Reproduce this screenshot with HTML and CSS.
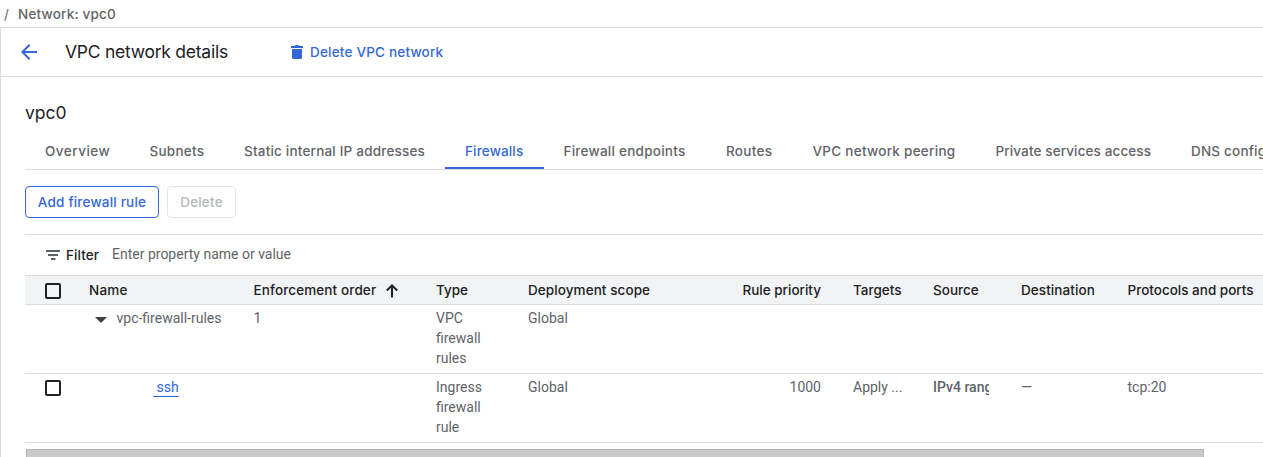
FILE: index.html
```html
<!DOCTYPE html>
<html lang="en">
<head>
<meta charset="utf-8">
<title>VPC network details</title>
<link rel="stylesheet" href="styles.css">
</head>
<body>
<nav class="crumbs"><span class="slash">/</span><span class="crumb">Network: vpc0</span></nav>
<main class="panel">
  <header class="header">
    <svg class="back" width="24" height="24" viewBox="0 0 24 24"><path d="M20 11H7.83l5.59-5.59L12 4l-8 8 8 8 1.41-1.41L7.83 13H20z"/></svg>
    <h1 class="title">VPC network details</h1>
    <button class="delete-network">
      <svg width="18" height="18" viewBox="0 0 18 18"><path d="M4 6h10v8.400a1.600 1.600 0 0 1-1.600 1.600H5.600A1.600 1.600 0 0 1 4 14.400zM3 3h3.500l1-1h3l1 1H15v2H3z"/></svg>
      <span class="delete-label">Delete VPC network</span>
    </button>
  </header>
  <section class="content">
    <h2 class="name">vpc0</h2>
    <div class="tabs">
      <div class="tab overview">Overview</div>
      <div class="tab subnets">Subnets</div>
      <div class="tab static">Static internal IP addresses</div>
      <div class="tab firewalls active">Firewalls</div>
      <div class="tab endpoints">Firewall endpoints</div>
      <div class="tab routes">Routes</div>
      <div class="tab peering">VPC network peering</div>
      <div class="tab private">Private services access</div>
      <div class="tab dns">DNS configuration</div>
    </div>
    <div class="actions">
      <button class="btn add">Add firewall rule</button>
      <button class="btn remove" disabled>Delete</button>
    </div>
    <div class="filter">
      <svg width="14" height="10" viewBox="0 0 14 10"><path d="M0 0h14v2H0zM2 4h10v2H2zM5 8h4.500v2H5z"/></svg>
      <span class="filter-label">Filter</span>
      <span class="filter-hint">Enter property name or value</span>
    </div>
    <div class="row head">
      <div class="check"><span class="box"></span></div>
      <div class="h-name">Name</div>
      <div class="sort"><span class="h-order">Enforcement order</span><svg width="12" height="14" viewBox="0 0 12 14"><path d="M6 13.500V1.500M.8 6.500 6 1.400l5.200 5.100" fill="none" stroke="#202124" stroke-width="2"/></svg></div>
      <div>Type</div>
      <div class="h-scope">Deployment scope</div>
      <div class="num">Rule priority</div>
      <div>Targets</div>
      <div>Source</div>
      <div class="h-dest">Destination</div>
      <div>Protocols and ports</div>
    </div>
    <div class="row">
      <div></div>
      <div class="group"><svg width="12" height="6" viewBox="0 0 12 6"><path d="M0 0h12L6 6z"/></svg>vpc-firewall-rules</div>
      <div>1</div>
      <div class="type">VPC firewall rules</div>
      <div>Global</div>
    </div>
    <div class="row">
      <div class="check"><span class="box"></span></div>
      <div><a class="link">ssh</a></div>
      <div></div>
      <div class="type">Ingress firewall rule</div>
      <div>Global</div>
      <div class="num">1000</div>
      <div>Apply ...</div>
      <div class="ranges">IPv4 ranges</div>
      <div>—</div>
      <div>tcp:20</div>
    </div>
    <div class="scroll"></div>
  </section>
</main>
</body>
</html>
```
FILE: styles.css
```css
* { box-sizing: border-box; }
body {
  margin: 0;
  height: 457px;
  overflow: hidden;
  background: #fff;
  color: #5f6368;
  font: 14px/20px Roboto, sans-serif;
}
h1, h2 { margin: 0; font-weight: 400; color: #202124; font-family: Inter, sans-serif; }
button { font: inherit; background: none; border: 0; padding: 0; }
.crumbs, .tab, .btn, .delete-network, .filter-label, .head {
  font-family: Inter, sans-serif;
  font-size: 13.5px;
  font-weight: 500;
}
.crumbs { height: 27px; padding: 4px 0 0 4px; display: flex; gap: 9px; }
.slash { font-weight: 400; width: 5px; }
.crumb { letter-spacing: 0.2px; }
.panel { height: 430px; border: solid #dadce0; border-width: 1px 0 0 1px; overflow: hidden; }
.header { height: 49px; border-bottom: 1px solid #dadce0; display: flex; align-items: center; padding-left: 16px; }
.back { fill: #3367d6; }
.title { width: 225px; margin-left: 24px; font-size: 17.5px; line-height: 24px; letter-spacing: -0.25px; white-space: nowrap; }
.delete-network { display: flex; align-items: center; gap: 4px; color: #3367d6; margin-left: -2px; letter-spacing: 0.2px; }
.delete-network svg { fill: #3367d6; }
.content { padding-left: 24px; }
.name { height: 56px; padding-top: 24px; font-size: 17.5px; line-height: 24px; }
.tabs { height: 37px; display: flex; border-bottom: 1px solid #dadce0; white-space: nowrap; overflow: hidden; }
.tab { flex: none; padding: 8px 0 0 20px; height: 36px; }
.active { color: #3367d6; border-bottom: 2px solid #3367d6; }
.overview { width: 104.5px; letter-spacing: 0.5px; }
.subnets { width: 94.5px; letter-spacing: 0.25px; }
.static { width: 221px; letter-spacing: 0.2px; }
.firewalls { width: 98.5px; letter-spacing: 0.15px; }
.endpoints { width: 162.5px; letter-spacing: 0.25px; }
.routes { width: 86.5px; letter-spacing: 0.3px; }
.peering { width: 183px; letter-spacing: 0.27px; }
.private { width: 195.5px; letter-spacing: 0.12px; }
.dns { letter-spacing: 0.2px; }
.actions { height: 64px; padding-top: 16px; display: flex; gap: 8px; }
.btn { height: 32px; border: 1px solid #3367d6; border-radius: 4px; color: #3367d6; white-space: nowrap; letter-spacing: 0.2px; }
.add { width: 134px; }
.remove { width: 69px; border-color: #e4e5e7; color: #b6b8ba; }
.filter { height: 41px; border-top: 1px solid #dadce0; padding: 0 0 2px 21px; display: flex; align-items: center; }
.filter svg { fill: #5f6368; margin-top: 2px; }
.filter-label { color: #202124; margin-left: 6px; width: 46px; margin-top: 1px; letter-spacing: 0.1px; }
.filter-hint { margin-top: -1px; }
.row {
  display: grid;
  grid-template-columns: 64px 164.5px 182.5px 92px 141px 184px 80px 88px 106.5px 200px;
  height: 69px;
  padding-top: 3px;
  border-bottom: 1px solid #dadce0;
}
.head { height: 30px; padding-top: 4px; border-top: 1px solid #dadce0; background: #f1f3f4; color: #202124; white-space: nowrap; }
.check { padding: 3px 0 0 20px; }
.box { display: block; width: 16px; height: 16px; border: 2px solid #202124; border-radius: 2px; }
.sort { display: flex; align-items: flex-start; }
.sort svg { margin-top: 4px; }
.h-name { letter-spacing: 0.2px; }
.h-order { width: 132.5px; letter-spacing: 0.12px; }
.h-scope, .h-dest { letter-spacing: 0.08px; }
.num { text-align: right; padding-right: 32px; }
.group { display: flex; padding-left: 6px; gap: 9.5px; }
.group svg { fill: #3c4043; margin-top: 9px; }
.type { width: 60px; }
.link { display: block; width: 26px; height: 20px; margin-left: 64px; padding-left: 3.5px; color: #3367d6; border-bottom: 1px solid #3367d6; }
.ranges { width: 56px; font-weight: 500; white-space: nowrap; overflow: hidden; }
.scroll { width: 1178px; height: 9px; margin: 6px 0 0 1px; border: 1px solid #b3b3b3; border-bottom: 0; background: #cbcbcb; }
```
